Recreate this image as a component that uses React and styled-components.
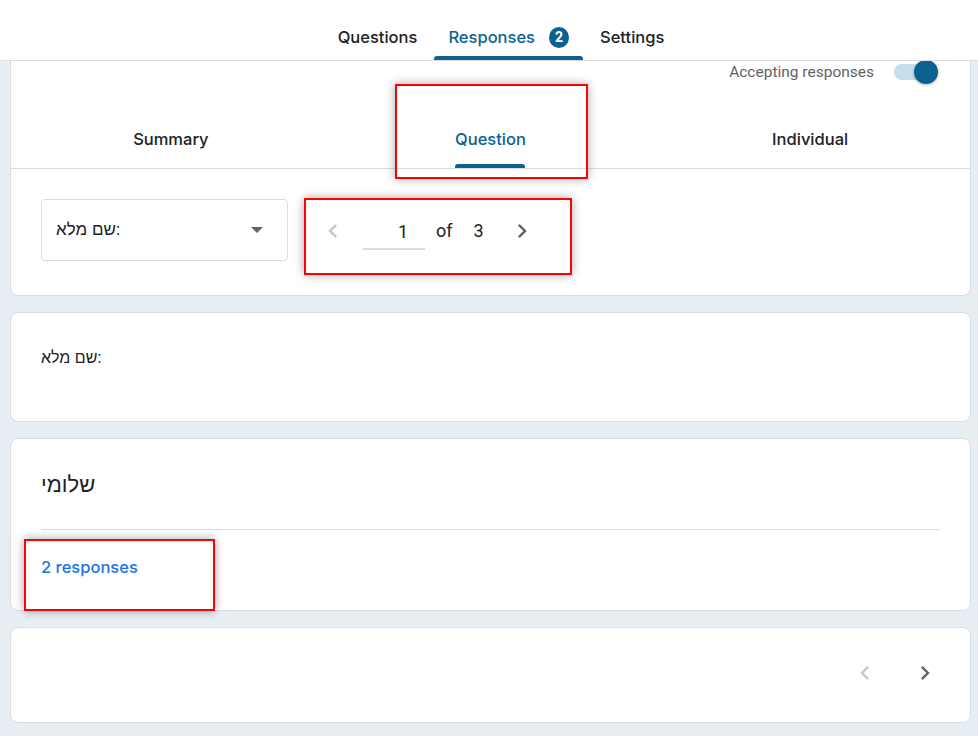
import React from "react";
import styled, { createGlobalStyle } from "styled-components";

const GlobalStyle = createGlobalStyle`
  body {
    margin: 0;
    background-color: #e7eef4;
    font-family: Inter, "Open Sans", Roboto, sans-serif;
    color: #202124;
  }
`;

const Page = styled.div`
  position: relative;
  min-height: 736px;
`;

const Header = styled.header`
  height: 60px;
  background-color: #fff;
  border-bottom: 1px solid #dadce0;
  display: flex;
  justify-content: center;
  align-items: stretch;
  gap: 3px;
  padding-left: 24px;
`;

const HeaderTab = styled.div`
  position: relative;
  display: flex;
  align-items: center;
  gap: 14px;
  padding: 14px 14px 0;
  font-size: 16.5px;
  font-weight: 500;
  color: ${(p) => (p.$active ? "#0b6290" : "#202124")};

  &::after {
    content: "";
    display: ${(p) => (p.$active ? "block" : "none")};
    position: absolute;
    left: 0;
    right: 0;
    bottom: 0;
    height: 4px;
    border-radius: 3px 3px 0 0;
    background-color: #0b6290;
  }
`;

const Badge = styled.span`
  width: 20px;
  height: 21px;
  border-radius: 50%;
  background-color: #0b6290;
  color: #fff;
  font-family: Roboto, sans-serif;
  font-size: 14px;
  font-weight: 700;
  display: flex;
  align-items: center;
  justify-content: center;
`;

const Content = styled.main`
  padding: 0 7px 0 10px;
  display: flex;
  flex-direction: column;
  gap: 16px;
`;

const Card = styled.section`
  background-color: #fff;
  border: 1px solid #dadce0;
  border-radius: ${(p) => (p.$scrolled ? "0 0 8px 8px" : "8px")};
  border-top: ${(p) => (p.$scrolled ? "none" : "1px solid #dadce0")};
  overflow: hidden;
`;

const AcceptRow = styled.div`
  height: 22px;
  display: flex;
  justify-content: flex-end;
  align-items: center;
  gap: 20px;
  padding-right: 30px;
  font-family: Roboto, sans-serif;
  font-size: 15.5px;
  color: #5f6368;
`;

const Toggle = styled.div`
  position: relative;
  width: 32px;
  height: 16px;
  border-radius: 8px;
  background-color: #c5dfec;
  margin-right: 14px;

  &::after {
    content: "";
    position: absolute;
    left: 20px;
    top: -4px;
    width: 24px;
    height: 24px;
    border-radius: 50%;
    background-color: #0b6290;
    box-shadow: 0 1px 3px rgba(0, 0, 0, 0.3);
  }
`;

const SubTabs = styled.div`
  display: grid;
  grid-template-columns: repeat(3, 1fr);
  margin-top: 37px;
  border-bottom: 1px solid #dadce0;
`;

const SubTab = styled.div`
  position: relative;
  height: 48px;
  display: flex;
  justify-content: center;
  align-items: center;
  padding-bottom: 10px;
  box-sizing: border-box;
  font-size: 16.5px;
  font-weight: 500;
  color: ${(p) => (p.$active ? "#0b6290" : "#202124")};

  &::after {
    content: "";
    display: ${(p) => (p.$active ? "block" : "none")};
    position: absolute;
    bottom: 0;
    left: 50%;
    transform: translateX(-50%);
    width: 70px;
    height: 4px;
    border-radius: 3px 3px 0 0;
    background-color: #0b6290;
  }
`;

const Controls = styled.div`
  display: flex;
  align-items: center;
  gap: 31px;
  padding: 30px 30px 34px;
`;

const Select = styled.div`
  width: 247px;
  height: 62px;
  box-sizing: border-box;
  border: 1px solid #dadce0;
  border-radius: 4px;
  display: flex;
  align-items: center;
  justify-content: space-between;
  padding: 0 24px 0 14px;
  font-family: "Liberation Sans", "DejaVu Sans", sans-serif;
  font-size: 17px;
`;

const Caret = styled.span`
  width: 0;
  height: 0;
  border-left: 6px solid transparent;
  border-right: 6px solid transparent;
  border-top: 6px solid #5f6368;
`;

const Pager = styled.div`
  display: flex;
  align-items: center;
  font-family: Roboto, sans-serif;
  font-size: 18px;
  color: #202124;
  margin-top: 1px;
`;

const ChevronButton = styled.span`
  width: 28px;
  height: 28px;
  display: flex;
  align-items: center;
  justify-content: center;
  color: ${(p) => (p.$disabled ? "#c4c7cb" : "#5f6368")};
`;

const PageInput = styled.span`
  width: 62px;
  box-sizing: border-box;
  text-align: right;
  padding: 0 17px 6px 0;
  border-bottom: 2px solid #dadce0;
  margin: 9px 11px 0 16px;
`;

const OfText = styled.span`
  margin-right: 21px;
`;

const NextGap = styled.span`
  width: 24px;
`;

const QuestionTitle = styled.div`
  padding: 36px 30px 54px;
  font-family: "Liberation Sans", "DejaVu Sans", sans-serif;
  font-size: 16px;
  line-height: 18px;
`;

const AnswerBody = styled.div`
  padding: 30px 30px 0;
`;

const Answer = styled.div`
  font-family: "Liberation Sans", "DejaVu Sans", sans-serif;
  font-size: 22px;
  line-height: 32px;
  padding-bottom: 28px;
  border-bottom: 1px solid #dadce0;
`;

const ResponsesLink = styled.div`
  color: #1a73e8;
  font-size: 16.5px;
  font-weight: 500;
  padding: 27px 0 33px;
`;

const FooterNav = styled.div`
  height: 94px;
  display: flex;
  align-items: center;
  justify-content: flex-end;
  gap: 32px;
  padding: 0 31px 4px 0;
  box-sizing: border-box;
`;

const Highlight = styled.div`
  position: absolute;
  border: 2px solid #ff0000;
  box-shadow: 0 0 9px rgba(0, 0, 0, 0.35);
  pointer-events: none;
`;

const Chevron = ({ dir }) => (
  <svg width="28" height="28" viewBox="0 0 24 24" fill="currentColor">
    {dir === "left" ? (
      <path d="M15.41 7.41 14 6l-6 6 6 6 1.41-1.41L10.83 12z" />
    ) : (
      <path d="M10 6 8.59 7.41 13.17 12l-4.58 4.59L10 18l6-6z" />
    )}
  </svg>
);

const App = () => {
  return (
    <Page>
      <GlobalStyle />
      <Header>
        <HeaderTab>Questions</HeaderTab>
        <HeaderTab $active>
          Responses
          <Badge>2</Badge>
        </HeaderTab>
        <HeaderTab>Settings</HeaderTab>
      </Header>
      <Content>
        <Card $scrolled>
          <AcceptRow>
            Accepting responses
            <Toggle />
          </AcceptRow>
          <SubTabs>
            <SubTab>Summary</SubTab>
            <SubTab $active>Question</SubTab>
            <SubTab>Individual</SubTab>
          </SubTabs>
          <Controls>
            <Select>
              <span>שם מלא:</span>
              <Caret />
            </Select>
            <Pager>
              <ChevronButton $disabled>
                <Chevron dir="left" />
              </ChevronButton>
              <PageInput>1</PageInput>
              <OfText>of</OfText>
              <span>3</span>
              <NextGap />
              <ChevronButton>
                <Chevron dir="right" />
              </ChevronButton>
            </Pager>
          </Controls>
        </Card>
        <Card>
          <QuestionTitle>שם מלא:</QuestionTitle>
        </Card>
        <Card>
          <AnswerBody>
            <Answer>שלומי</Answer>
            <ResponsesLink>2 responses</ResponsesLink>
          </AnswerBody>
        </Card>
        <Card>
          <FooterNav>
            <ChevronButton $disabled>
              <Chevron dir="left" />
            </ChevronButton>
            <ChevronButton>
              <Chevron dir="right" />
            </ChevronButton>
          </FooterNav>
        </Card>
      </Content>
      <Highlight style={{ left: 395, top: 84, width: 189, height: 91 }} />
      <Highlight style={{ left: 304, top: 198, width: 264, height: 73 }} />
      <Highlight style={{ left: 24, top: 539, width: 187, height: 68 }} />
    </Page>
  );
};

export default App;
